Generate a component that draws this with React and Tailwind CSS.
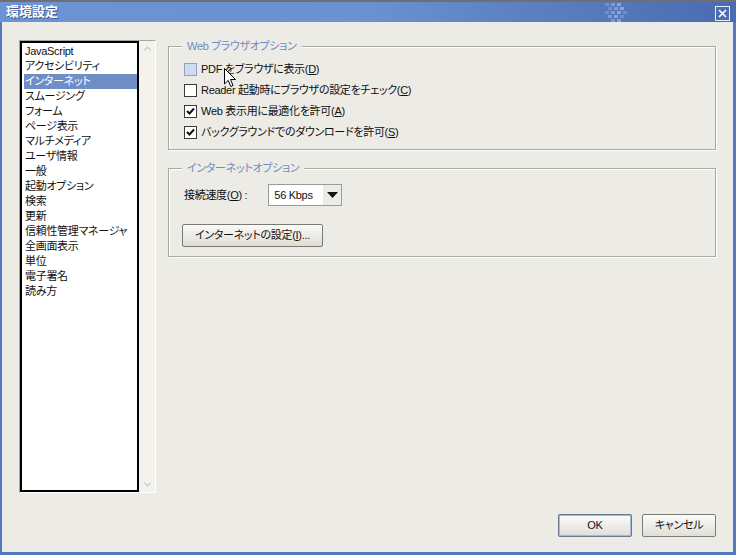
import { ChevronUp, ChevronDown } from "lucide-react";

const font = "[font-family:'Liberation_Sans','Noto_Sans_CJK_JP',sans-serif] [font-feature-settings:'palt']";

const items = [
  "JavaScript",
  "アクセシビリティ",
  "インターネット",
  "スムージング",
  "フォーム",
  "ページ表示",
  "マルチメディア",
  "ユーザ情報",
  "一般",
  "起動オプション",
  "検索",
  "更新",
  "信頼性管理マネージャ",
  "全画面表示",
  "単位",
  "電子署名",
  "読み方",
];

function Key({ k }) {
  return (
    <>
      (<span className="underline">{k}</span>)
    </>
  );
}

function Check({ checked, hover, children }) {
  return (
    <div className="flex items-center h-[21px]">
      <div
        className={
          "w-[13px] h-[13px] border flex items-center justify-center " +
          (hover ? "border-[#8ea3c4] bg-[#cfdcef]" : "border-[#3a3a3a] bg-white")
        }
      >
        {checked && (
          <svg width="9" height="9" viewBox="0 0 9 9">
            <path d="M1 4 L3.5 6.5 L8 1.5" stroke="#111" strokeWidth="2" fill="none" />
          </svg>
        )}
      </div>
      <span className="ml-[4px] text-[#111]">{children}</span>
    </div>
  );
}

function Group({ title, className, children }) {
  return (
    <div className={"relative border border-[#a9a9a4] shadow-[inset_1px_1px_0_#fff,1px_1px_0_#fff] " + className}>
      <span className="absolute -top-[9px] left-[13px] px-[5px] bg-[#ecebe5] text-[#6f8cc0] leading-[16px]">
        {title}
      </span>
      {children}
    </div>
  );
}

export default function App() {
  return (
    <div className={"w-[736px] h-[555px] bg-[#6f6f6f] pt-[2px] text-[11px] tracking-[-0.3px] " + font}>
      <div className="h-[553px] flex flex-col bg-[#5579c0] pl-[2px] pr-[3px] pb-[3px]">
        {/* Title bar */}
        <div className="relative h-[20px] -ml-[2px] -mr-[3px] flex items-center bg-gradient-to-r from-[#6c94d4] via-[#6a91d0] to-[#4a6bb0]">
          <span className="ml-[6px] text-white font-bold text-[13px] tracking-normal [text-shadow:1px_1px_0_#3d5a96]">環境設定</span>
          <svg className="absolute left-[603px] top-0" width="30" height="20" viewBox="0 0 30 20">
            {[
              [2, 1], [8, 1], [14, 1], [5, 5], [11, 5], [17, 5], [2, 9], [8, 9], [14, 9], [20, 9], [5, 13], [11, 13], [17, 13], [8, 17], [14, 17],
            ].map(([x, y], i) => (
              <rect key={i} x={x} y={y} width="4" height="3" fill="#a7bde6" opacity={0.35 + (i % 3) * 0.15} />
            ))}
          </svg>
          <div className="absolute left-[715px] top-[4px] w-[15px] h-[15px] border border-[#e6ecf7] flex items-center justify-center">
            <svg width="9" height="9" viewBox="0 0 9 9">
              <path d="M1 1 L8 8 M8 1 L1 8" stroke="#fff" strokeWidth="1.6" />
            </svg>
          </div>
        </div>

        {/* Body */}
        <div className="relative flex-1 bg-[#ecebe5] flex flex-col">
          <div className="flex flex-1 pt-[18px] pl-[17px]">
            {/* List */}
            <div className="flex w-[137px] h-[453px] border-t border-l border-[#a6a6a0] border-r border-b border-r-white border-b-white">
              <div className="w-[119px] border-2 border-black bg-white pt-[1px] pl-[3px] overflow-hidden">
                {items.map((it) => (
                  <div
                    key={it}
                    className={
                      "h-[15px] leading-[15px] whitespace-nowrap pl-[1px] -ml-[1px] " +
                      (it === "インターネット" ? "bg-[#6f8ec6] text-white" : "text-[#111]")
                    }
                  >
                    {it}
                  </div>
                ))}
              </div>
              <div className="flex-1 flex flex-col justify-between items-center bg-[#f3f2ec] py-[2px]">
                <ChevronUp size={11} className="text-[#c8c8c2]" strokeWidth={3} />
                <ChevronDown size={11} className="text-[#c8c8c2]" strokeWidth={3} />
              </div>
            </div>

            {/* Right panel */}
            <div className="ml-[12px] flex flex-col w-[548px] pt-[6px]">
              <Group title="Web ブラウザオプション" className="h-[104px] pt-[12px] pl-[15px]">
                <Check hover>PDF をブラウザに表示<Key k="D" /></Check>
                <Check>Reader 起動時にブラウザの設定をチェック<Key k="C" /></Check>
                <Check checked>Web 表示用に最適化を許可<Key k="A" /></Check>
                <Check checked>バックグラウンドでのダウンロードを許可<Key k="S" /></Check>
              </Group>

              <Group title="インターネットオプション" className="mt-[18px] h-[89px] pt-[15px] pl-[15px]">
                <div className="flex items-center h-[22px]">
                  <span className="text-[#111]">接続速度<Key k="O" /> :</span>
                  <div className="ml-[21px] w-[74px] h-[22px] flex border border-[#9a9a96] bg-white">
                    <span className="flex-1 pl-[5px] leading-[20px] text-[#111]">56 Kbps</span>
                    <div className="w-[19px] flex items-center justify-center bg-[#ecebe5] border-l border-white">
                      <svg width="11" height="6" viewBox="0 0 11 6">
                        <path d="M0 0 H11 L5.5 6 Z" fill="#111" />
                      </svg>
                    </div>
                  </div>
                </div>
                <button className="mt-[18px] -ml-[2px] w-[141px] h-[23px] border border-[#7a7a76] bg-gradient-to-b from-[#fbfbf8] to-[#dedcd4] text-[#111] rounded-[2px]">
                  インターネットの設定<Key k="I" />...
                </button>
              </Group>
            </div>
          </div>

          {/* Buttons */}
          <div className="flex justify-end gap-[10px] pr-[17px] pb-[15px]">
            <button className="w-[74px] h-[23px] border-2 border-[#a3b9dc] outline outline-1 outline-[#6b7a92] -outline-offset-1 bg-gradient-to-b from-[#fbfbf8] to-[#e0dfd8] text-[#111] rounded-[2px]">
              OK
            </button>
            <button className="w-[74px] h-[23px] border border-[#7a7a76] bg-gradient-to-b from-[#fbfbf8] to-[#e0dfd8] text-[#111] rounded-[2px]">
              キャンセル
            </button>
          </div>

          {/* Mouse cursor */}
          <svg className="absolute left-[222px] top-[46px]" width="13" height="20" viewBox="0 0 13 20">
            <path d="M0.5 0.5 V16 L4.2 12.4 L6.8 18.5 L9 17.5 L6.5 11.5 L11.5 11.5 Z" fill="#fff" stroke="#000" strokeWidth="1" />
          </svg>
        </div>
      </div>
    </div>
  );
}
